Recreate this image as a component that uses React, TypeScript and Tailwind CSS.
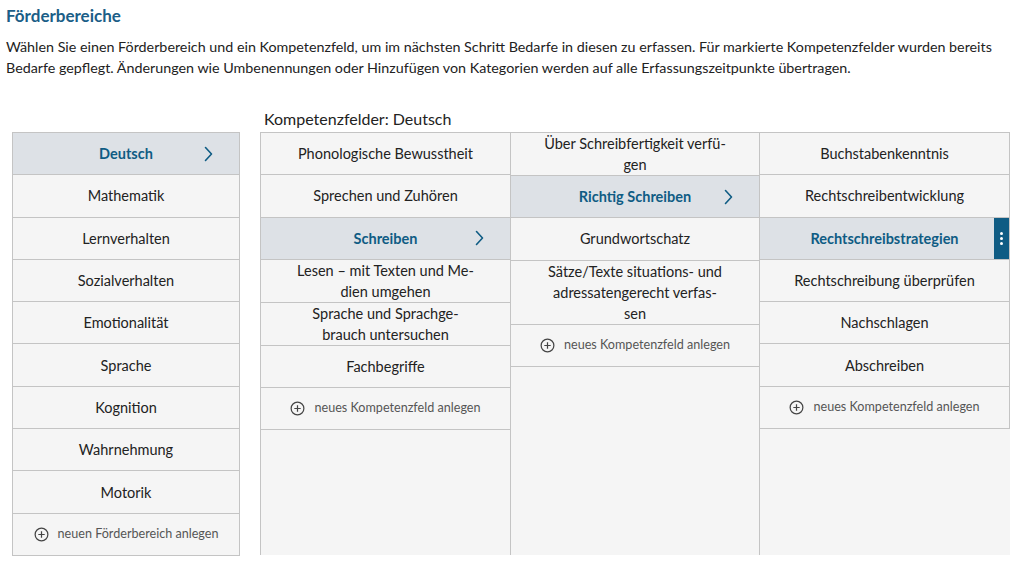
import React from 'react'

type Item = { label: React.ReactNode; active?: boolean; chevron?: boolean; menu?: boolean }

const bereiche: Item[] = [
  { label: 'Deutsch', active: true, chevron: true },
  { label: 'Mathematik' },
  { label: 'Lernverhalten' },
  { label: 'Sozialverhalten' },
  { label: 'Emotionalität' },
  { label: 'Sprache' },
  { label: 'Kognition' },
  { label: 'Wahrnehmung' },
  { label: 'Motorik' },
]

const col1: Item[] = [
  { label: 'Phonologische Bewusstheit' },
  { label: 'Sprechen und Zuhören' },
  { label: 'Schreiben', active: true, chevron: true },
  { label: <>Lesen – mit Texten und Me-<br />dien umgehen</> },
  { label: <>Sprache und Sprachge-<br />brauch untersuchen</> },
  { label: 'Fachbegriffe' },
]

const col2: Item[] = [
  { label: <>Über Schreibfertigkeit verfü-<br />gen</> },
  { label: 'Richtig Schreiben', active: true, chevron: true },
  { label: 'Grundwortschatz' },
  { label: <>Sätze/Texte situations- und<br />adressatengerecht verfas-<br />sen</> },
]

const col3: Item[] = [
  { label: 'Buchstabenkenntnis' },
  { label: 'Rechtschreibentwicklung' },
  { label: 'Rechtschreibstrategien', active: true, menu: true },
  { label: 'Rechtschreibung überprüfen' },
  { label: 'Nachschlagen' },
  { label: 'Abschreiben' },
]

const Chevron = () => (
  <svg width="9" height="16" viewBox="0 0 9 16" fill="none" className="absolute right-[26px] top-1/2 -translate-y-1/2">
    <path d="M1.5 1.5 L7.5 8 L1.5 14.5" stroke="#0f5c84" strokeWidth="1.6" strokeLinecap="round" strokeLinejoin="round" />
  </svg>
)

const PlusCircle = () => (
  <svg width="15" height="15" viewBox="0 0 16 16" fill="none">
    <circle cx="8" cy="8" r="6.8" stroke="#444" strokeWidth="1.3" />
    <path d="M8 4.6 V11.4 M4.6 8 H11.4" stroke="#444" strokeWidth="1.3" />
  </svg>
)

const Row = ({ item }: { item: Item }) => (
  <div
    className={`relative flex min-h-[42.3px] items-center justify-center border-b border-[#c4c4c4] px-6 text-center text-[14.5px] leading-[21px] ${
      item.active ? 'bg-[#dde1e6] font-bold text-[#0f5c84]' : 'bg-[#f5f5f5] text-[#222]'
    }`}
  >
    <span>{item.label}</span>
    {item.chevron && <Chevron />}
    {item.menu && (
      <div className="absolute right-0 top-0 flex h-full w-[15px] flex-col items-center justify-center gap-[2px] bg-[#0f5c84]">
        <span className="h-[3px] w-[3px] rounded-full bg-white" />
        <span className="h-[3px] w-[3px] rounded-full bg-white" />
        <span className="h-[3px] w-[3px] rounded-full bg-white" />
      </div>
    )}
  </div>
)

const AddRow = ({ label }: { label: string }) => (
  <div className="flex min-h-[42.3px] items-center justify-center gap-[9px] border-b border-[#c4c4c4] bg-[#f5f5f5] text-[12.6px] text-[#555]">
    <PlusCircle />
    <span>{label}</span>
  </div>
)

export default function App() {
  return (
    <div className="min-h-screen bg-white font-['Lato',sans-serif] text-[#222]">
      <div className="px-[6px] pt-[5px]">
        <h1 className="text-[17px] font-bold leading-[22px] text-[#1b5e87]">Förderbereiche</h1>
        <p className="mt-[9px] text-[14.3px] leading-[21px] text-[#222]">
          Wählen Sie einen Förderbereich und ein Kompetenzfeld, um im nächsten Schritt Bedarfe in diesen zu erfassen. Für markierte Kompetenzfelder wurden bereits Bedarfe gepflegt. Änderungen wie Umbenennungen oder Hinzufügen von Kategorien werden auf alle Erfassungszeitpunkte übertragen.
        </p>
      </div>

      <div className="mt-[31px] grid grid-cols-[228px_750px] gap-x-[20px] pl-[12px]">
        <div />
        <div className="pb-[3px] pl-[4px] text-[16px] leading-[20px] text-[#222]">Kompetenzfelder: Deutsch</div>

        <div className="border-x border-t border-[#c4c4c4]">
          {bereiche.map((b, i) => (
            <Row key={i} item={b} />
          ))}
          <AddRow label="neuen Förderbereich anlegen" />
        </div>

        <div className="grid h-[423px] grid-cols-3 bg-[#f5f5f5]">
          <div className="border-l border-t border-[#c4c4c4]">
            {col1.map((b, i) => (
              <Row key={i} item={b} />
            ))}
            <AddRow label="neues Kompetenzfeld anlegen" />
          </div>
          <div className="border-x border-t border-[#c4c4c4]">
            {col2.map((b, i) => (
              <Row key={i} item={b} />
            ))}
            <AddRow label="neues Kompetenzfeld anlegen" />
          </div>
          <div className="self-start border-r border-t border-[#c4c4c4]">
            {col3.map((b, i) => (
              <Row key={i} item={b} />
            ))}
            <AddRow label="neues Kompetenzfeld anlegen" />
          </div>
        </div>
      </div>
    </div>
  )
}
